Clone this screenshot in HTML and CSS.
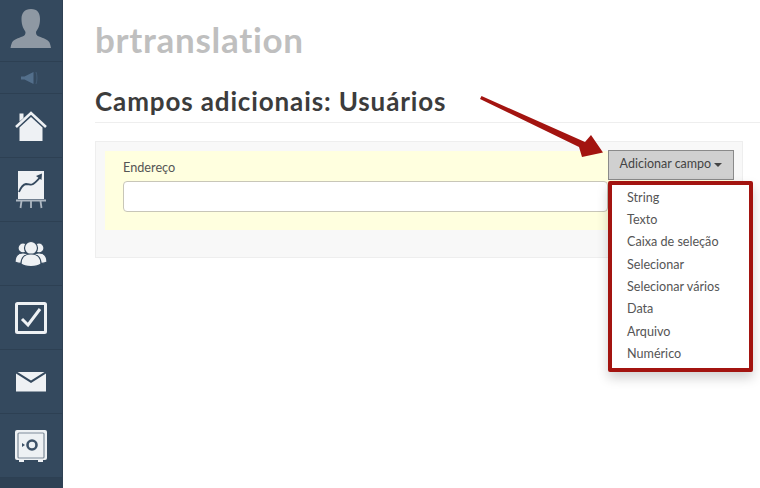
FILE: index.html
```html
<!DOCTYPE html>
<html lang="pt">
<head>
    <meta charset="UTF-8">
    <title>Campos adicionais: Usuários</title>
    <link rel="stylesheet" href="styles.css">
</head>
<body>
    <div class="sidebar">
        <div class="side-item avatar">
            <svg width="42" height="42" viewBox="0 0 42 42"><path fill="#8e98a3" d="M21 1c6.500 0 9 4 9 10 0 3-.5 6-1.500 8.500-.8 2-2 3-2.500 4.500 0 2 .5 3.500 3 4.500 4 1.700 9 3 10.500 6 .8 1.700 1.200 3.500 1.500 5.500H0.500c.3-2 .7-3.800 1.500-5.500 1.500-3 6.500-4.300 10.500-6 2.500-1 3-2.500 3-4.500-.5-1.500-1.700-2.500-2.500-4.500C12 17 11.500 14 11.500 11c0-6 3-10 9.500-10z"/></svg>
        </div>
        <div class="side-item sound">
            <svg width="20" height="14" viewBox="0 0 20 14"><path fill="#536f8b" d="M0 5.500h3.500l9-4.500v12l-9-4.500H0z"/><path fill="none" stroke="#445d77" stroke-width="1" d="M15 1c1.300 3.500 1.300 8.500 0 12"/></svg>
        </div>
        <div class="side-item">
            <svg width="32" height="32" viewBox="0 0 32 32"><path fill="#eef1f4" d="M4.500 17.500 16 7l11.500 10.500V31h-23z"/><path fill="none" stroke="#eef1f4" stroke-width="2.600" d="M1 17 16 3l15 14"/><path fill="#eef1f4" d="M4.500 3.500h4v4.500l-4 3.500z"/></svg>
        </div>
        <div class="side-item">
            <svg width="30" height="38" viewBox="0 0 30 38"><path fill="#eef1f4" d="M2 0h26v28H2z"/><path fill="none" stroke="#34495e" stroke-width="1.800" d="M3 21c2-5 4-7.500 7-8 3 0 4 1 6 .5 3-1 6-5 8-7"/><path fill="#34495e" d="M20 5l6-2.500-.5 6.500z"/><path fill="none" stroke="#aeb8c2" stroke-width="1.800" d="M0 29.500h30M5.500 30l-1 7M15 30v7M24.500 30l1 7"/></svg>
        </div>
        <div class="side-item">
            <svg width="32" height="28" viewBox="0 0 32 28"><g fill="#eef1f4" stroke="#34495e" stroke-width="1.200"><circle cx="8" cy="8" r="5"/><circle cx="24" cy="8" r="5"/><path d="M0 22c0-6 3-9 8-9s8 3 8 9c-3 2-13 2-16 0z"/><path d="M16 22c0-6 3-9 8-9s8 3 8 9c-3 2-13 2-16 0z"/><circle cx="16" cy="8" r="6.500"/><path d="M6 24c0-7 4-10 10-10s10 3 10 10c-4 3.500-16 3.500-20 0z"/></g></svg>
        </div>
        <div class="side-item">
            <svg width="32" height="32" viewBox="0 0 32 32"><rect x="1.500" y="1.500" width="29" height="29" rx="1" fill="none" stroke="#eef1f4" stroke-width="3"/><path fill="none" stroke="#eef1f4" stroke-width="3" d="M7 17l6 6L25 7"/></svg>
        </div>
        <div class="side-item">
            <svg width="30" height="20" viewBox="0 0 30 20"><path fill="#eef1f4" d="M0 1.500 15 11 30 1.500V19.500H0zM1.500 0h27L15 8.500z"/></svg>
        </div>
        <div class="side-item">
            <svg width="32" height="32" viewBox="0 0 32 32"><rect x="0" y="0" width="32" height="30" rx="2" fill="#eef1f4"/><rect x="3" y="3" width="26" height="25" rx="1" fill="#eef1f4" stroke="#7e8c99" stroke-width="1.200"/><path fill="#eef1f4" d="M4 30h5v2H4zM23 30h5v2h-5z"/><circle cx="17" cy="15" r="4.500" fill="none" stroke="#3e5268" stroke-width="2.600"/><path fill="#3e5268" d="M7 13l3 2-3 2z"/></svg>
        </div>
        <div class="side-rest"></div>
    </div>

    <div class="main">
        <h1 class="brand">brtranslation</h1>
        <h2 class="page-title">Campos adicionais: Usuários</h2>

        <div class="panel">
            <div class="field-row">
                <div class="field">
                    <label class="field-label">Endereço</label>
                    <input class="field-input" type="text">
                </div>
                <div class="dropdown">
                    <button class="add-btn">Adicionar campo <span class="caret"></span></button>
                    <ul class="menu">
                        <li>String</li>
                        <li>Texto</li>
                        <li>Caixa de seleção</li>
                        <li>Selecionar</li>
                        <li>Selecionar vários</li>
                        <li>Data</li>
                        <li>Arquivo</li>
                        <li>Numérico</li>
                    </ul>
                </div>
            </div>
        </div>
    </div>

    <svg class="arrow" width="130" height="66" viewBox="0 0 130 66"><path fill="#a31410" d="M0 3 1.500 0 105 46 111 39 123 56.500 102 61 99 51z"/></svg>
</body>
</html>
```

FILE: styles.css
```css
html, body {
    height: 100%;
}
body {
    margin: 0;
    display: flex;
    height: 488px;
    overflow: hidden;
    background: #fff;
    font-family: Lato, "Open Sans", Arial, sans-serif;
    color: #4d4d4d;
}
.sidebar {
    width: 62px;
    flex: none;
    display: flex;
    flex-direction: column;
    background: #34495e;
    border-right: 1px solid #2f4154;
}
.side-item {
    height: 63px;
    flex: none;
    display: flex;
    align-items: center;
    justify-content: center;
    border-bottom: 1px solid #2d4053;
}
.avatar {
    height: 61px;
    align-items: flex-end;
}
.avatar svg {
    margin-bottom: 11px;
}
.sound {
    height: 31px;
}
.side-rest {
    flex: 1;
    background: #2e4154;
}
.main {
    flex: 1;
    padding: 0 0 0 32px;
}
.brand {
    margin: 19px 0 0;
    font-size: 35px;
    line-height: 40px;
    letter-spacing: 0.7px;
    font-weight: 700;
    color: #bfbfbf;
}
.page-title {
    margin: 24px 0 0;
    padding-bottom: 3px;
    border-bottom: 1px solid #eee;
    font-size: 26px;
    line-height: 36px;
    letter-spacing: 0.87px;
    font-weight: 700;
    color: #3c3c3c;
}
.panel {
    margin: 18px 17px 0 0;
    height: 97px;
    padding: 9px;
    background: #f8f8f8;
    border: 1px solid #eee;
}
.field-row {
    display: flex;
    justify-content: space-between;
    height: 79px;
    background: #ffffdf;
}
.field {
    flex: 1;
    padding: 8px 0 0 18px;
}
.field-label {
    display: block;
    font-size: 12.700px;
    line-height: 16px;
    margin-bottom: 6px;
    color: #555;
}
.field-input {
    display: block;
    box-sizing: border-box;
    width: 100%;
    height: 31px;
    background: #fff;
    border: 1px solid #c8c6b8;
    border-radius: 4px;
}
.dropdown {
    position: relative;
    width: 126px;
    flex: none;
    margin: -1px -1px 0 0;
}
.add-btn {
    display: block;
    width: 100%;
    height: 30px;
    padding: 0 0 3px;
    background: #d0d0d0;
    border: 1px solid #8a8a8a;
    font-family: inherit;
    font-size: 12.500px;
    color: #444;
}
.caret {
    display: inline-block;
    width: 0;
    height: 0;
    margin-left: 0;
    vertical-align: middle;
    border-top: 4px solid #444;
    border-left: 4px solid transparent;
    border-right: 4px solid transparent;
}
.menu {
    position: absolute;
    top: 31px;
    left: 0;
    width: 145px;
    height: 191px;
    box-sizing: border-box;
    margin: 0;
    padding: 1.500px 0;
    list-style: none;
    background: #fff;
    border: 4px solid #a31410;
    border-radius: 2px;
    box-shadow: 0 6px 12px rgba(0,0,0,0.18);
}
.menu li {
    height: 22.400px;
    line-height: 22.400px;
    padding-left: 15px;
    font-size: 12.600px;
    color: #555;
}
.arrow {
    position: absolute;
    left: 480px;
    top: 96px;
}
```
